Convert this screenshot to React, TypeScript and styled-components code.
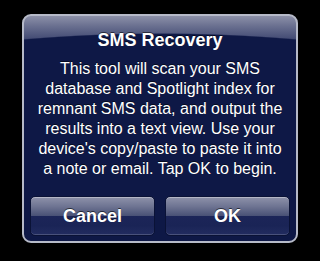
import styled, { createGlobalStyle } from 'styled-components';

const GlobalStyle = createGlobalStyle`
  html, body {
    margin: 0;
    padding: 0;
    background: #000;
  }
  body {
    font-family: "Liberation Sans", Arial, Helvetica, sans-serif;
  }
`

const Screen = styled.div`
  width: 320px;
  height: 261px;
  background: #000;
  padding: 14px 0 0 22px;
  box-sizing: border-box;
`

const Alert = styled.div`
  width: 276px;
  height: 229px;
  box-sizing: border-box;
  border: 2px solid #b6bac8;
  border-radius: 9px;
  overflow: hidden;
  display: flex;
  flex-direction: column;
  align-items: center;
  padding: 13px 6px 5px;
  background:
    radial-gradient(ellipse 700px 306px at 50% 323px, #0e1846 99.6%, rgba(14, 24, 70, 0) 100%),
    linear-gradient(to bottom, #8c90a8 0px, #6a7090 10px, #464e76 22px, #0e1846 30px);
  box-shadow: 0 2px 8px rgba(0, 0, 0, 0.8);
`

const Title = styled.h2`
  margin: 0;
  font-size: 18px;
  line-height: 22px;
  font-weight: 700;
  color: #fff;
  text-align: center;
  text-shadow: 0 -1px 0 rgba(0, 0, 0, 0.55);
`

const Message = styled.p`
  margin: 8px 0 0;
  width: 248px;
  font-size: 16px;
  line-height: 20px;
  color: #fff;
  text-align: center;
  text-shadow: 0 -1px 0 rgba(0, 0, 0, 0.55);
`

const ButtonRow = styled.div`
  margin-top: auto;
  align-self: stretch;
  display: grid;
  grid-template-columns: 1fr 1fr;
  gap: 10px;
`

const Button = styled.button`
  height: 40px;
  padding: 0;
  border: 1px solid #0a1236;
  border-radius: 5px;
  font-family: "Liberation Sans", Arial, Helvetica, sans-serif;
  font-size: 18px;
  font-weight: 700;
  line-height: 38px;
  color: #fff;
  text-shadow: 0 -1px 0 rgba(0, 0, 0, 0.6);
  background: linear-gradient(
    to bottom,
    #8e92aa 0%,
    #6e7492 25%,
    #4a5276 49%,
    #1c2558 50%,
    #1a2456 75%,
    #222c60 100%
  );
  box-shadow: inset 0 1px 0 rgba(255, 255, 255, 0.35), inset 0 -1px 0 rgba(255, 255, 255, 0.18);
  cursor: pointer;
`

export default function App() {
  return (
    <>
      <GlobalStyle />
      <Screen>
        <Alert>
          <Title>SMS Recovery</Title>
          <Message>
            This tool will scan your SMS database and Spotlight index for remnant SMS data, and output the results into a text view. Use your device's copy/paste to paste it into a note or email. Tap OK to begin.
          </Message>
          <ButtonRow>
            <Button>Cancel</Button>
            <Button>OK</Button>
          </ButtonRow>
        </Alert>
      </Screen>
    </>
  )
}
